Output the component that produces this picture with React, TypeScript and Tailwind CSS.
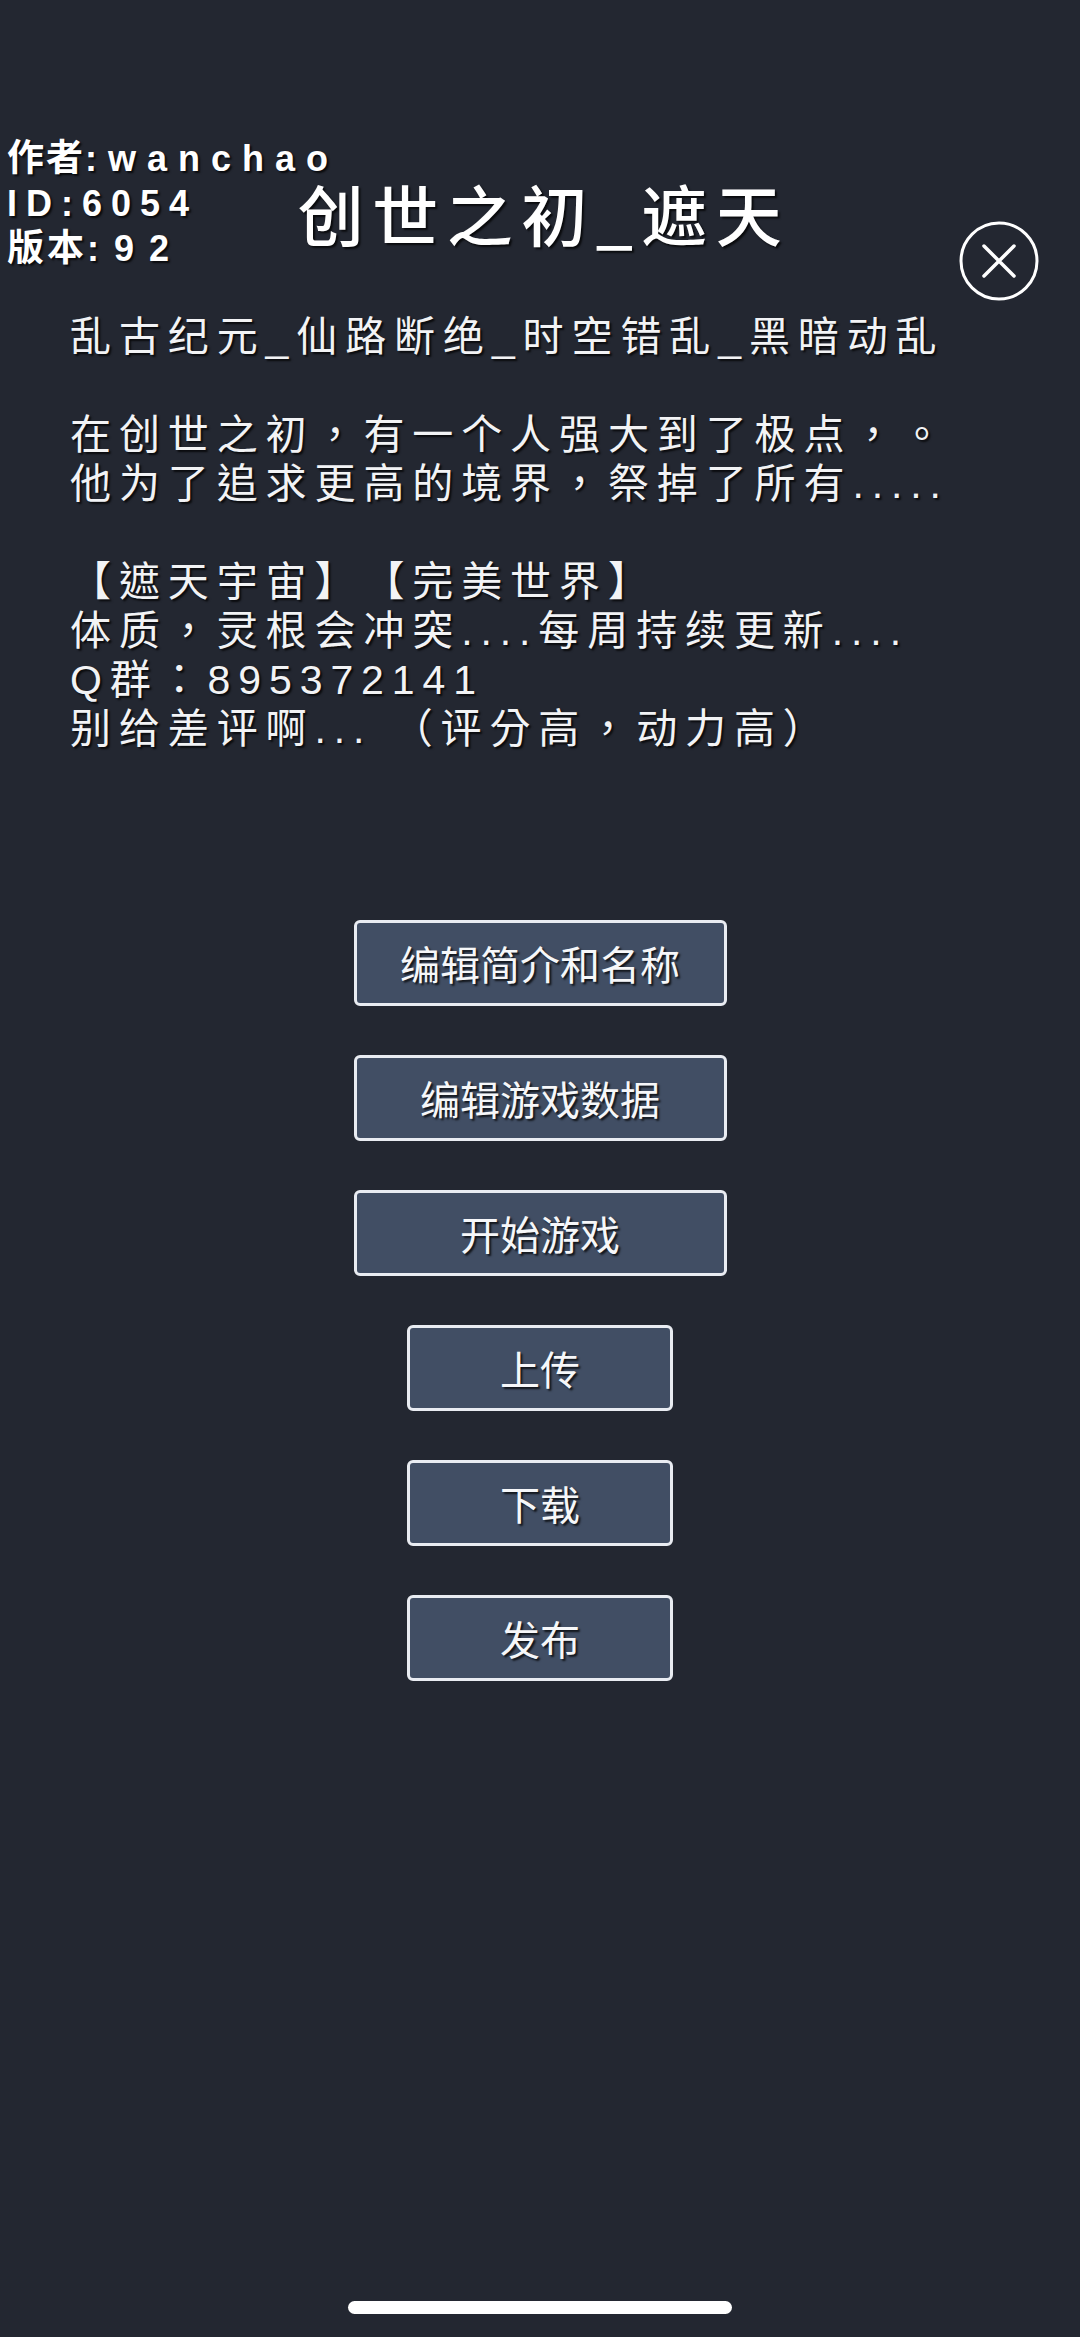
import React from "react";

const shadow = "[text-shadow:2px_2px_2px_rgba(0,0,0,0.75)]";

function GameButton({ label, wide }: { label: string; wide?: boolean }) {
  return (
    <div
      className={`${wide ? "w-[373px]" : "w-[266px]"} h-[86px] flex items-center justify-center rounded-[6px] border-[3px] border-[#e9ecf2] bg-[#414e64] text-[40px] leading-none text-[#f6f7f9] ${shadow}`}
      style={{ fontFamily: '"Noto Sans CJK SC", "Noto Sans", sans-serif' }}
    >
      {label}
    </div>
  );
}

export default function App() {
  const lines: (string | null)[] = [
    "乱古纪元_仙路断绝_时空错乱_黑暗动乱",
    null,
    "在创世之初，有一个人强大到了极点，。",
    "他为了追求更高的境界，祭掉了所有.....",
    null,
    "【遮天宇宙】【完美世界】",
    "体质，灵根会冲突....每周持续更新....",
    "Q群：895372141",
    "别给差评啊... （评分高，动力高）",
  ];

  return (
    <div className="w-[1080px] h-[2337px] bg-[#232731] flex flex-col overflow-hidden">
      {/* Header */}
      <div className="grid pt-[136px]">
        <div
          className={`col-start-1 row-start-1 self-start justify-self-start pl-[7px] text-[36px] leading-[45px] font-bold text-white ${shadow}`}
          style={{ fontFamily: '"Liberation Sans", "Noto Sans CJK SC", sans-serif' }}
        >
          <div>
            <span className="text-[37px] tracking-[2px]">作者</span>
            <span className="tracking-[11px]">:wanchao</span>
          </div>
          <div className="tracking-[9px]">ID:6054</div>
          <div>
            <span className="text-[37px] tracking-[3px]">版本</span>
            <span className="tracking-[15px]">:92</span>
          </div>
        </div>
        <div
          className={`col-start-1 row-start-1 self-start justify-self-center mt-[36px] pl-[8px] text-[66px] leading-[80px] font-medium tracking-[8.5px] text-white ${shadow}`}
          style={{ fontFamily: '"Noto Sans CJK SC", "Noto Sans", sans-serif' }}
        >
          创世之初_遮天
        </div>
        <div className="col-start-1 row-start-1 self-start justify-self-end mt-[85px] mr-[41px]">
          <svg width="80" height="80" viewBox="0 0 80 80" fill="none">
            <circle cx="40" cy="40" r="38" stroke="#ffffff" strokeWidth="3" />
            <path d="M25 25 L55 55 M55 25 L25 55" stroke="#ffffff" strokeWidth="3.5" strokeLinecap="round" />
          </svg>
        </div>
      </div>

      {/* Description */}
      <div
        className={`mt-[12px] pl-[70px] text-[41px] leading-[49px] tracking-[7.9px] text-[#f2f3f5] [text-spacing-trim:space-all] ${shadow}`}
        style={{ fontFamily: '"Liberation Sans", "Noto Sans CJK TC", sans-serif' }}
      >
        {lines.map((l, i) =>
          l === null ? (
            <div key={i} className="h-[49px]" />
          ) : (
            <div key={i} className="whitespace-pre">
              {l}
            </div>
          )
        )}
      </div>

      {/* Buttons */}
      <div className="mt-[166px] flex flex-col items-center gap-[49px]">
        <GameButton label="编辑简介和名称" wide />
        <GameButton label="编辑游戏数据" wide />
        <GameButton label="开始游戏" wide />
        <GameButton label="上传" />
        <GameButton label="下载" />
        <GameButton label="发布" />
      </div>

      <div className="flex-1" />
      {/* Home indicator */}
      <div className="flex justify-center pb-[23px]">
        <div className="w-[384px] h-[13px] rounded-full bg-white" />
      </div>
    </div>
  );
}
